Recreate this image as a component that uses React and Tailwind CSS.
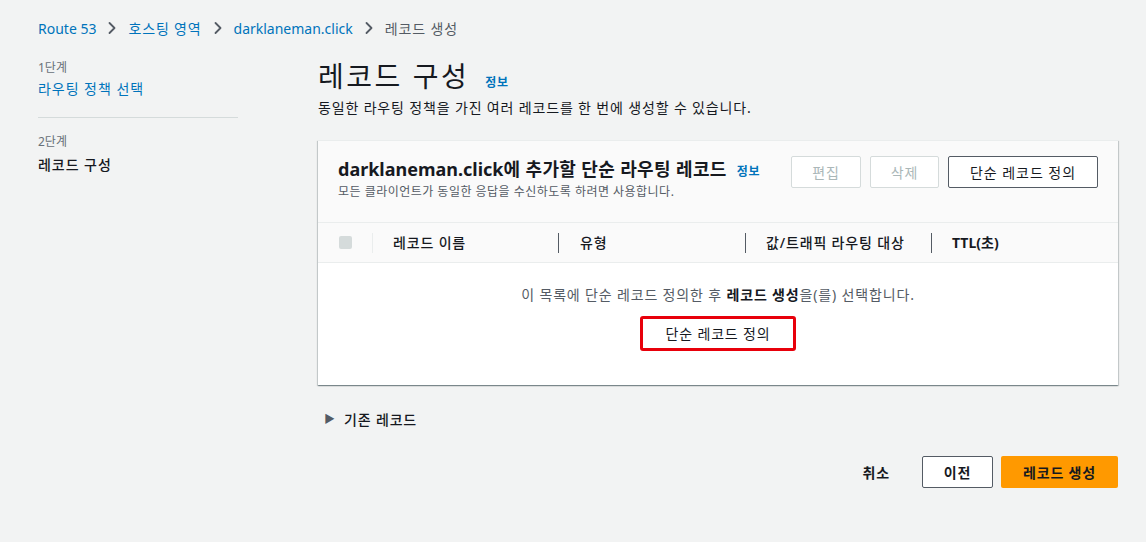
import { ChevronRight } from "lucide-react";

const FONT = { fontFamily: '"Noto Sans", "Noto Sans CJK KR", sans-serif' };

const crumbs = [
  { t: "Route 53", k: false },
  { t: "호스팅 영역", k: true },
  { t: "darklaneman.click", k: false },
];

const Info = ({ className = "" }) => (
  <span className={`text-[12px] font-bold text-[#0073bb] tracking-[0.06em] ${className}`}>정보</span>
);

export default function App() {
  return (
    <div style={FONT} className="min-h-screen w-full bg-[#f2f3f3] text-[#16191f] px-[38px] pt-[16px]">
      {/* breadcrumb */}
      <nav className="flex items-center h-[24px] text-[14px]">
        {crumbs.map((c) => (
          <span key={c.t} className="flex items-center">
            <span className={`text-[#0073bb] ${c.k ? "tracking-[0.06em]" : ""}`}>{c.t}</span>
            <ChevronRight className="w-[20px] h-[20px] mx-[6px] text-[#545b64]" strokeWidth={2.2} />
          </span>
        ))}
        <span className="text-[#545b64] tracking-[0.06em]">레코드 생성</span>
      </nav>

      <div className="flex mt-[17px]">
        {/* steps */}
        <aside className="w-[200px] shrink-0 pt-[3px] tracking-[0.06em]">
          <div className="text-[12px] leading-[16px] text-[#687078] tracking-normal">1단계</div>
          <div className="text-[14px] leading-[20px] text-[#0073bb] mt-[3px]">라우팅 정책 선택</div>
          <div className="border-t border-[#d5dbdb] mt-[18px]" />
          <div className="text-[12px] leading-[16px] text-[#687078] mt-[16px] tracking-normal">2단계</div>
          <div className="text-[14px] leading-[20px] font-medium mt-[5px]">레코드 구성</div>
        </aside>

        {/* main */}
        <main className="flex-1 ml-[80px] mr-[-10px]">
          <div className="flex items-baseline gap-[16px] mt-[1px]">
            <h1 className="text-[28px] leading-[36px] font-normal tracking-[0.09em]">레코드 구성</h1>
            <Info />
          </div>
          <p className="text-[14px] leading-[20px] mt-[4px] tracking-[0.06em]">
            동일한 라우팅 정책을 가진 여러 레코드를 한 번에 생성할 수 있습니다.
          </p>

          <section className="mt-[22px] bg-white border-t border-[#eaeded] shadow-[0_1px_1px_0_rgba(0,28,36,0.3),1px_1px_1px_0_rgba(0,28,36,0.15),-1px_1px_1px_0_rgba(0,28,36,0.15)]">
            <div className="bg-[#fafafa] flex justify-between px-[20px] pt-[15px] pb-[22px] border-b border-[#eaeded]">
              <div className="pt-[1px]">
                <div className="flex items-baseline gap-[10px]">
                  <h2 className="text-[18px] leading-[24px] font-bold">
                    darklaneman.click<span className="tracking-[0.02em]">에 추가할 단순 라우팅 레코드</span>
                  </h2>
                  <Info />
                </div>
                <p className="text-[12px] leading-[16px] text-[#545b64] mt-[3px] tracking-[0.04em]">
                  모든 클라이언트가 동일한 응답을 수신하도록 하려면 사용합니다.
                </p>
              </div>
              <div className="flex gap-[9px] h-[32px] tracking-[0.06em]">
                <button className="w-[70px] border border-[#d5dbdb] bg-white text-[#aab7b8] text-[14px] rounded-[2px]">편집</button>
                <button className="w-[69px] border border-[#d5dbdb] bg-white text-[#aab7b8] text-[14px] rounded-[2px]">삭제</button>
                <button className="w-[150px] border border-[#545b64] bg-white text-[#16191f] text-[14px] rounded-[2px]">단순 레코드 정의</button>
              </div>
            </div>

            {/* table header */}
            <div className="bg-[#fafafa] flex items-center h-[40px] border-b border-[#eaeded] text-[14px] font-medium tracking-[0.06em]">
              <div className="w-[54px] pl-[21px] flex items-center">
                <span className="w-[13px] h-[13px] rounded-[2px] bg-[#d5dbdb]" />
              </div>
              <div className="w-[186px] flex items-center h-[20px] border-l border-[#eaeded] pl-[20px]">레코드 이름</div>
              <div className="w-[187px] flex items-center h-[20px] border-l border-[#545b64] pl-[21px]">유형</div>
              <div className="w-[186px] flex items-center h-[20px] border-l border-[#545b64] pl-[20px]">값/트래픽 라우팅 대상</div>
              <div className="flex-1 flex items-center h-[20px] border-l border-[#545b64] pl-[20px] font-bold tracking-normal">TTL(초)</div>
            </div>

            {/* empty state */}
            <div className="flex flex-col items-center pt-[22px] pb-[34px]">
              <p className="text-[14px] leading-[20px] text-[#545b64] tracking-[0.06em]">
                이 목록에 단순 레코드 정의한 후 <b className="text-[#16191f]">레코드 생성</b>을(를) 선택합니다.
              </p>
              <button className="mt-[11px] w-[156px] h-[35px] border-[3px] border-[#e8000b] rounded-[3px] bg-white text-[14px] text-[#16191f] tracking-[0.06em]">
                단순 레코드 정의
              </button>
            </div>
          </section>

          <div className="flex items-center mt-[24px] ml-[6px] text-[14px]">
            <span className="text-[11px] text-[#545b64] mr-[9px]">▶</span>
            <span className="font-medium tracking-[0.06em]">기존 레코드</span>
          </div>

          <div className="flex justify-end items-center mt-[26px] gap-[8px] text-[14px] font-bold tracking-[0.06em]">
            <button className="px-[20px] h-[32px] text-[#16191f]">취소</button>
            <button className="w-[71px] h-[32px] border border-[#545b64] rounded-[2px] bg-white text-[#16191f] ml-[4px]">이전</button>
            <button className="w-[117px] h-[32px] rounded-[2px] bg-[#ff9900] text-[#16191f]">레코드 생성</button>
          </div>
        </main>
      </div>
    </div>
  );
}
